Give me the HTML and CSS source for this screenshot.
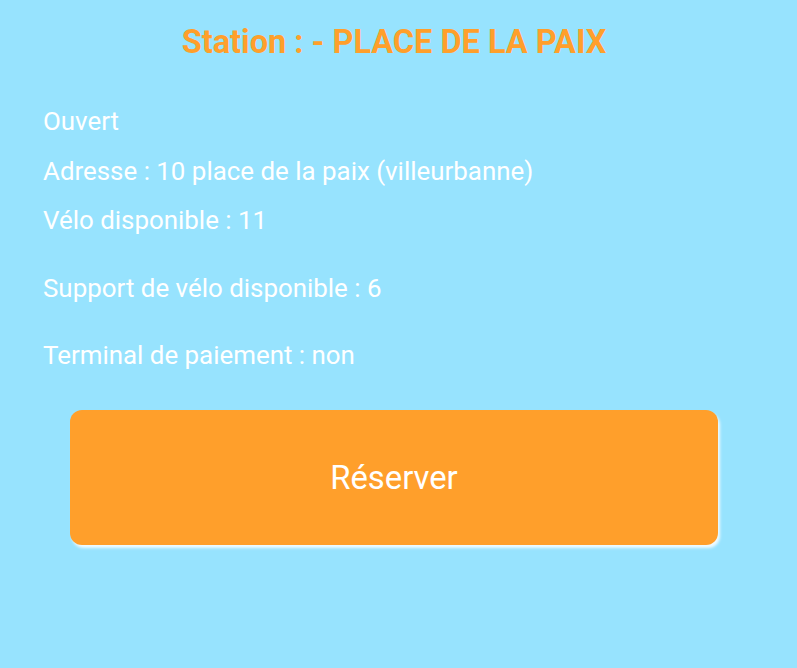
FILE: index.html
```html
<!DOCTYPE html>
<html lang="fr">
<head>
<meta charset="utf-8">
<link rel="stylesheet" href="styles.css">
<title>Station</title>
</head>
<body>
<main class="page">
  <h1 class="title">Station : - PLACE DE LA PAIX</h1>
  <section class="info">
    <div class="group">
      <p class="line">Ouvert</p>
      <p class="line">Adresse : 10 place de la paix (villeurbanne)</p>
      <p class="line">Vélo disponible : 11</p>
    </div>
    <p class="line extra">Support de vélo disponible : 6</p>
    <p class="line extra">Terminal de paiement : non</p>
  </section>
  <div class="actions">
    <button class="btn" type="button">Réserver</button>
  </div>
</main>
</body>
</html>
```

FILE: styles.css
```css
html, body {
  margin: 0;
  padding: 0;
  background: #97e3fe;
  font-family: Roboto, "Liberation Sans", sans-serif;
}
.page {
  width: 788px;
  min-height: 668px;
  box-sizing: border-box;
  padding-top: 22px;
}
.title {
  margin: 0;
  text-align: center;
  color: #ff9f2b;
  font-size: 32.5px;
  font-weight: 700;
  line-height: 40px;
}
.info {
  padding: 0 43px;
  margin-top: 44px;
}
.group {
  display: flex;
  flex-direction: column;
  gap: 19.5px;
}
.line {
  margin: 0;
  color: #fff;
  font-size: 25.9px;
  line-height: 30px;
}
.line.extra {
  margin-top: 37.5px;
}
.actions {
  padding: 40px 70px 0;
}
.btn {
  display: block;
  width: 100%;
  height: 135px;
  border: 0;
  border-radius: 12px;
  background: #ff9f2b;
  color: #fff;
  font-family: Roboto, "Liberation Sans", sans-serif;
  font-size: 32.8px;
  box-shadow: 2px 3px 3px rgba(255,255,255,0.85);
}
```
